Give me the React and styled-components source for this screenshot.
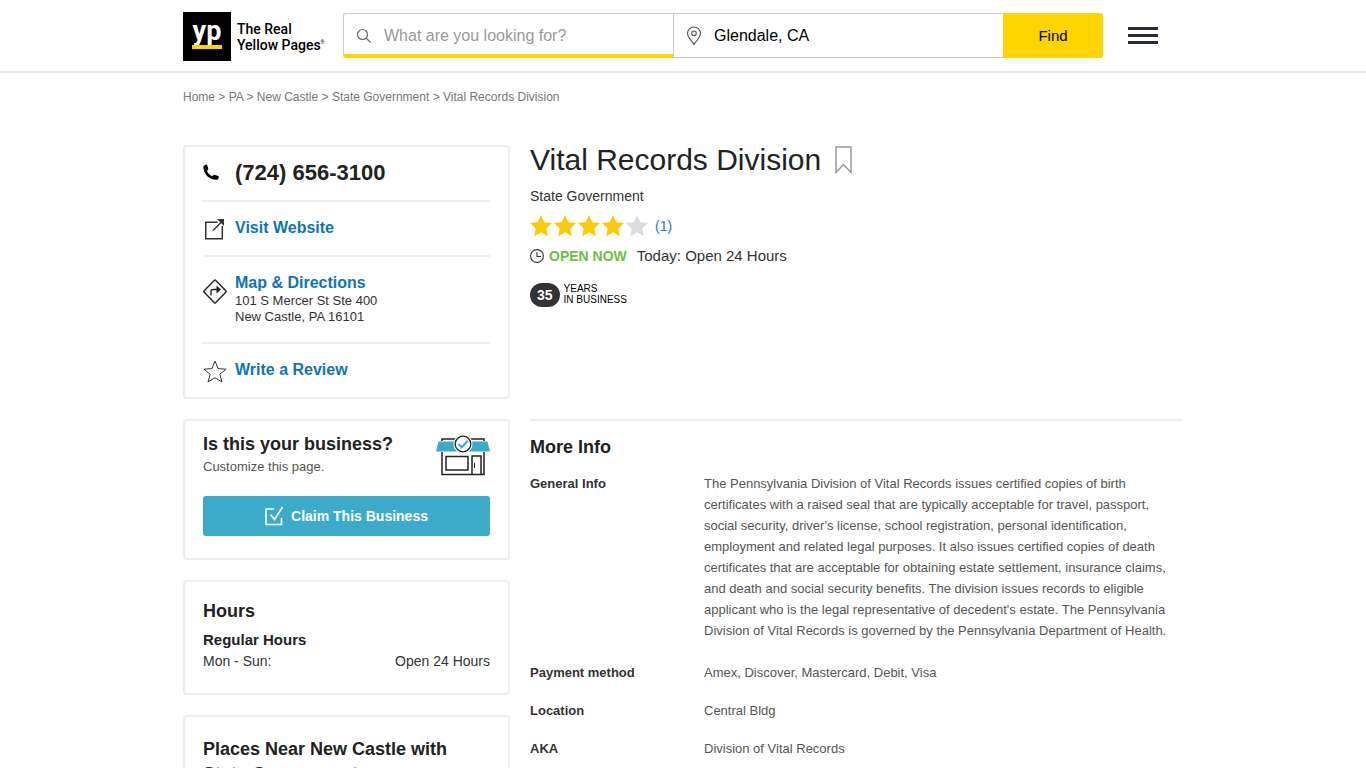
import React from "react";
import styled, { createGlobalStyle } from "styled-components";

const GlobalStyle = createGlobalStyle`
*{
  margin:0;
  padding:0;
  box-sizing:border-box;
}
body{
  background:#fff;
  color:#222;
  font-family:"Liberation Sans", Arial, sans-serif;
  font-size:15px;
  line-height:20px;
}
a{
  text-decoration:none;
}
svg{
  display:block;
  flex:none;
}`

const Container = styled.div`
max-width:1000px;
margin:0 auto;`

const Header = styled.header`
border-bottom:2px solid #e6e6e6;`

const HeaderRow = styled(Container)`
display:flex;
align-items:center;
height:71px;`

const Logo = styled.a`
display:flex;
align-items:center;
gap:6px;
width:160px;
padding-top:2px;
color:#000;
font-family:Roboto, sans-serif;
font-size:14px;
font-weight:500;
line-height:16px;
white-space:nowrap;
sup{
  font-size:5px;
  line-height:5px;
}`

const LogoBox = styled.span`
display:flex;
flex-direction:column;
align-items:center;
gap:1px;
width:48px;
height:49px;
padding-top:6px;
background:#000;
color:#fff;
font-size:27px;
font-weight:700;
line-height:26px;
&:after{
  content:"";
  width:30px;
  height:4px;
  background:#ffd400;
}`

const Search = styled.form`
display:flex;
width:760px;
height:45px;`

const Field = styled.label`
display:flex;
flex:1;
align-items:center;
gap:12px;
padding-left:12px;
border:1px solid #ccc;
border-right:0;
border-radius:${({ $active }) => ($active ? "3px 0 0 3px" : "0")};
box-shadow:${({ $active }) => ($active ? "inset 0 -3px #ffd400" : "none")};
border-bottom-color:${({ $active }) => ($active ? "#ffd400" : "#ccc")};`

const Input = styled.input`
flex:1;
min-width:0;
border:0;
outline:0;
background:transparent;
color:#000;
font:16px "Liberation Sans", Arial, sans-serif;
&::placeholder{
  color:#999;
  opacity:1;
}`

const Find = styled.button`
width:100px;
border:0;
border-radius:0 3px 3px 0;
background:#ffd400;
color:#000;
font:15px "Liberation Sans", Arial, sans-serif;`

const Menu = styled.button`
display:flex;
flex-direction:column;
gap:4px;
width:30px;
margin-left:25px;
border:0;
background:none;
span{
  height:3px;
  background:#262c3a;
}`

const Crumbs = styled.nav`
padding-top:14px;
color:#777;
font-size:12px;
a{
  color:#777;
}`

const Columns = styled.div`
display:grid;
grid-template-columns:327px 1fr;
gap:20px;
padding-top:38px;`

const Sidebar = styled.aside`
display:flex;
flex-direction:column;
gap:20px;`

const Card = styled.section`
padding:${({ $pad }) => $pad};
border:2px solid #eee;
border-radius:4px;`

const Contact = styled.div`
display:grid;
grid-template-columns:24px 1fr;
align-items:start;
column-gap:8px;
padding:${({ $pad }) => $pad};
border-bottom:${({ $last }) => ($last ? "0" : "2px solid #eee")};
svg{
  margin-top:${({ $drop }) => $drop || "0"};
}`

const Phone = styled.a`
color:#222;
font-size:22px;
font-weight:bold;
line-height:26px;`

const BlueLink = styled.a`
color:#0f75b0;
font-size:16px;
font-weight:bold;`

const Address = styled.address`
color:#333;
font-size:13px;
font-style:normal;
line-height:16px;`

const Title = styled.h2`
color:#222;
font-size:18px;
line-height:${({ $tall }) => ($tall ? "25px" : "22px")};`

const ClaimTop = styled.div`
display:flex;
align-items:center;
justify-content:space-between;`

const Small = styled.p`
color:#555;
font-size:13px;
line-height:24px;`

const Claim = styled.button`
display:flex;
align-items:center;
justify-content:center;
gap:8px;
width:100%;
height:40px;
margin-top:17px;
border:0;
border-radius:3px;
background:#3cabc9;
color:#fff;
font:bold 14px "Liberation Sans", Arial, sans-serif;`

const Subtitle = styled.h3`
margin-top:8px;
font-size:15px;
line-height:20px;`

const HoursRow = styled.div`
display:flex;
justify-content:space-between;
color:#333;
font-size:14px;
line-height:22px;`

const Summary = styled.div`
min-height:274px;`

const NameRow = styled.div`
display:flex;
align-items:center;
gap:14px;`

const Name = styled.h1`
color:#222;
font-size:30px;
font-weight:normal;
line-height:30px;`

const Bookmark = styled.button`
border:0;
background:none;`

const Category = styled.a`
display:block;
margin-top:11px;
color:#333;
font-size:14px;
line-height:20px;`

const Rating = styled.div`
display:flex;
align-items:center;
gap:2px;
margin-top:8px;
height:24px;
a{
  margin-left:5px;
  color:#337ab7;
  font-size:14px;
}`

const Status = styled.div`
display:flex;
align-items:center;
gap:5px;
height:20px;
margin-top:8px;
color:#333;
strong{
  margin-right:5px;
  color:#6dbf46;
  font-size:14px;
}`

const Years = styled.div`
display:flex;
gap:4px;
margin-top:17px;
color:#000;
font-size:10px;
line-height:11px;
strong{
  padding:0 7px;
  border-radius:12px;
  background:#333;
  color:#fff;
  font-size:14px;
  line-height:24px;
}`

const MoreInfo = styled.section`
padding-top:15px;
border-top:2px solid #eee;`

const Info = styled.dl`
display:grid;
grid-template-columns:174px 1fr;
row-gap:17px;
padding-top:15px;
font-size:13px;
line-height:21px;
dt{
  color:#333;
  font-weight:bold;
}
dd{
  color:#555;
}
dd:first-of-type{
  margin-bottom:4px;
}`

const STAR = "M12 1l3.3 7.2 7.7.9-5.7 5.3 1.5 7.8L12 18.3l-6.8 3.9 1.5-7.8L1 9.1l7.7-.9z";

const crumbs = ["Home", "PA", "New Castle", "State Government"];

const details = [
  ["General Info", "The Pennsylvania Division of Vital Records issues certified copies of birth certificates with a raised seal that are typically acceptable for travel, passport, social security, driver's license, school registration, personal identification, employment and related legal purposes. It also issues certified copies of death certificates that are acceptable for obtaining estate settlement, insurance claims, and death and social security benefits. The division issues records to eligible applicant who is the legal representative of decedent's estate. The Pennsylvania Division of Vital Records is governed by the Pennsylvania Department of Health."],
  ["Payment method", "Amex, Discover, Mastercard, Debit, Visa"],
  ["Location", "Central Bldg"],
  ["AKA", "Division of Vital Records"],
];

const SearchIcon = () => (
  <svg width="16" height="16" viewBox="0 0 16 16" fill="none" stroke="#666" strokeWidth="1.2">
    <circle cx="6.5" cy="6.5" r="5" />
    <path d="M10.2 10.2l4.6 4.4" />
  </svg>
);

const PinIcon = () => (
  <svg width="16" height="20" viewBox="0 0 16 20" fill="none" stroke="#555" strokeWidth="1.1">
    <path d="M8 18.5C6 15 1.5 11.5 1.5 7.5a6.5 6.5 0 0 1 13 0C14.5 11.5 10 15 8 18.5z" />
    <circle cx="8" cy="7.3" r="2.3" />
  </svg>
);

const PhoneIcon = () => (
  <svg width="17" height="17" viewBox="0 0 17 17">
    <path fill="#000" d="M1.2 1.4L3 .7c.5-.2.9 0 1.1.4l1.2 3.6c.1.4 0 .8-.3 1L3.900 6.700c.9 2.600 2.700 4.400 5.400 5.600l1.100-1.200c.3-.3.7-.4 1.100-.3l3.700 1.200c.5.2.7.6.6 1l-.5 1.700c-.1.600-.6.900-1.200 1C6.500 16.200.4 10 .4 2.700c0-.6.3-1.100.8-1.300z" />
  </svg>
);

const WebsiteIcon = () => (
  <svg width="24" height="22" viewBox="0 0 24 22" fill="none" stroke="#333" strokeWidth="1.5">
    <path d="M14.5 4.2H2.8v16.5h16.500V8M10 12.500l9-9" />
    <path fill="#333" stroke="none" d="M14 1h7v7l-2-2-3-3z" />
  </svg>
);

const MapIcon = () => (
  <svg width="24" height="25" viewBox="0 0 24 25" fill="none" stroke="#222" strokeWidth="1.4">
    <path strokeLinejoin="round" d="M11.2 1.4q.8-.7 1.600 0l10 10.300q.7.800 0 1.600l-10 10.300q-.8.700-1.600 0l-10-10.300q-.7-.8 0-1.600z" />
    <path d="M8 16.500v-4q0-2 2-2h6" />
    <path fill="#222" stroke="none" d="M13.500 6.500l4.500 4-4.500 4z" />
  </svg>
);

const StarOutline = () => (
  <svg width="24" height="23" viewBox="0 0 24 23" fill="none" stroke="#333">
    <path d="M12 1l3.100 7.600 8 .6-6.300 5 2.200 7.800-7-4.200L5 22l2.200-7.800-6.300-5 8-.6z" />
  </svg>
);

const StoreIcon = () => (
  <svg width="54" height="42" viewBox="0 0 54 42">
    <g fill="none" stroke="#222" strokeWidth="1.5">
      <path d="M6 6V4h42v2M6 17v22.500h42V17" />
      <path d="M10 21.500h22V35H10zM36 39v-18h9v18" />
      <path d="M38.500 28v5" strokeWidth="1" />
    </g>
    <path fill="#3cabc9" d="M2.500 6.500h49L54 16.500H0z" />
    <circle cx="27" cy="9" r="9.500" fill="#fff" />
    <circle cx="27" cy="9" r="7.800" fill="#fff" stroke="#222" strokeWidth="1.3" />
    <path fill="none" stroke="#3cabc9" strokeWidth="2" d="M22.500 9l3.300 3.200 6-6.500" />
  </svg>
);

const CheckIcon = () => (
  <svg width="18" height="20" viewBox="0 0 18 20" fill="none" stroke="#fff" strokeWidth="1.7">
    <path d="M9 3H1v15.500h15.500V12M5.500 8.500l4 5 8-12.500" />
  </svg>
);

const ClockIcon = () => (
  <svg width="14" height="14" viewBox="0 0 14 14" fill="none" stroke="#333" strokeWidth="1.1">
    <circle cx="7" cy="7" r="6.400" />
    <path d="M7 3v4.500h4" />
  </svg>
);

export default class App extends React.Component {
  render() {
    return (
      <>
        <GlobalStyle />
        <Header>
          <HeaderRow>
            <Logo href="#">
              <LogoBox>yp</LogoBox>
              <span>The Real<br />Yellow Pages<sup>®</sup></span>
            </Logo>
            <Search>
              <Field $active>
                <SearchIcon />
                <Input placeholder="What are you looking for?" aria-label="What are you looking for?" />
              </Field>
              <Field>
                <PinIcon />
                <Input defaultValue="Glendale, CA" aria-label="Where" />
              </Field>
              <Find type="button">Find</Find>
            </Search>
            <Menu aria-label="Menu"><span /><span /><span /></Menu>
          </HeaderRow>
        </Header>
        <Container>
          <Crumbs>
            {crumbs.map((c) => <React.Fragment key={c}><a href="#">{c}</a>{" > "}</React.Fragment>)}
            Vital Records Division
          </Crumbs>
          <Columns>
            <Sidebar>
              <Card $pad="0 18px">
                <Contact $pad="13px 0 14px" $drop="4px">
                  <PhoneIcon />
                  <Phone href="#">(724) 656-3100</Phone>
                </Contact>
                <Contact $pad="16px 0 15px">
                  <WebsiteIcon />
                  <BlueLink href="#">Visit Website</BlueLink>
                </Contact>
                <Contact $pad="16px 0 17px" $drop="6px">
                  <MapIcon />
                  <div>
                    <BlueLink href="#">Map &amp; Directions</BlueLink>
                    <Address>101 S Mercer St Ste 400<br />New Castle, PA 16101</Address>
                  </div>
                </Contact>
                <Contact $pad="16px 0 14px" $last>
                  <StarOutline />
                  <BlueLink href="#">Write a Review</BlueLink>
                </Contact>
              </Card>
              <Card $pad="12px 18px 22px">
                <ClaimTop>
                  <div>
                    <Title>Is this your business?</Title>
                    <Small>Customize this page.</Small>
                  </div>
                  <StoreIcon />
                </ClaimTop>
                <Claim><CheckIcon />Claim This Business</Claim>
              </Card>
              <Card $pad="18px 18px 21px">
                <Title>Hours</Title>
                <Subtitle>Regular Hours</Subtitle>
                <HoursRow><span>Mon - Sun:</span><span>Open 24 Hours</span></HoursRow>
              </Card>
              <Card $pad="20px 18px">
                <Title $tall>Places Near New Castle with State Government</Title>
              </Card>
            </Sidebar>
            <main>
              <Summary>
                <NameRow>
                  <Name>Vital Records Division</Name>
                  <Bookmark aria-label="Save">
                    <svg width="17" height="28" viewBox="0 0 17 28" fill="none" stroke="#999" strokeWidth="1.5">
                      <path d="M1 1h15v25.500l-7.500-8-7.500 8z" />
                    </svg>
                  </Bookmark>
                </NameRow>
                <Category href="#">State Government</Category>
                <Rating>
                  {[1, 2, 3, 4, 5].map((n) => (
                    <svg key={n} width="22" height="22" viewBox="1 1 22 22">
                      <path fill={n < 5 ? "#fbc90c" : "#dcdce0"} d={STAR} />
                    </svg>
                  ))}
                  <a href="#">(1)</a>
                </Rating>
                <Status><ClockIcon /><strong>OPEN NOW</strong>Today: Open 24 Hours</Status>
                <Years><strong>35</strong><span>YEARS<br />IN BUSINESS</span></Years>
              </Summary>
              <MoreInfo>
                <Title>More Info</Title>
                <Info>
                  {details.map(([k, v]) => <React.Fragment key={k}><dt>{k}</dt><dd>{v}</dd></React.Fragment>)}
                </Info>
              </MoreInfo>
            </main>
          </Columns>
        </Container>
      </>
    );
  }
}
